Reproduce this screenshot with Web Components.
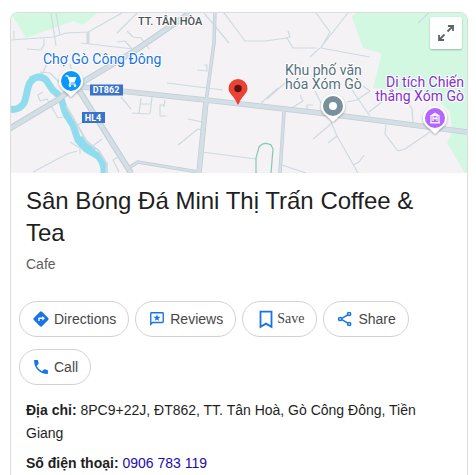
<!DOCTYPE html>
<html lang="vi">
<head>
<meta charset="utf-8">
<meta name="viewport" content="width=device-width, initial-scale=1">
<title>Sân Bóng Đá Mini Thị Trấn Coffee &amp; Tea</title>
<style>
  body { margin: 12px 8px 0 10px; background: #fff; color: #1f1f1f; font-family: "Liberation Sans", Arial, sans-serif; font-size: 14px; }
</style>
</head>
<body>
<place-card>
  <place-map slot="map"></place-map>
  <place-heading kind="Cafe">Sân Bóng Đá Mini Thị Trấn Coffee &amp; Tea</place-heading>
  <action-row>
    <action-button icon="directions">Directions</action-button>
    <action-button icon="reviews">Reviews</action-button>
    <action-button icon="save">Save</action-button>
    <action-button icon="share">Share</action-button>
    <action-button icon="call">Call</action-button>
  </action-row>
  <place-fact label="Địa chỉ:">8PC9+22J, ĐT862, TT. Tân Hoà, Gò Công Đông, Tiền Giang</place-fact>
  <place-fact label="Số điện thoại:" href="tel:0906783119">0906 783 119</place-fact>
</place-card>

<script>
class ShadowElement extends HTMLElement {
  connectedCallback() {
    if (this.shadowRoot) return;
    this.attachShadow({ mode: 'open' }).innerHTML = this.render();
  }
}

customElements.define('place-card', class extends ShadowElement {
  render() {
    return `<style>
      :host { display: block; box-sizing: border-box; min-height: calc(100vh - 12px); border: 1px solid #dadce0; border-bottom: 0; border-radius: 8px 8px 0 0; overflow: hidden; }
      .body { padding: 12px 15px 0; }
    </style>
    <slot name="map"></slot>
    <div class="body"><slot></slot></div>`;
  }
});

customElements.define('place-heading', class extends ShadowElement {
  render() {
    return `<style>
      :host { display: block; }
      h2 { margin: 0; font-size: 24px; line-height: 32px; font-weight: 400; }
      p { margin: 5px 0 0; font-size: 14px; line-height: 20px; color: #5e5e5e; }
    </style>
    <h2><slot></slot></h2><p>${this.getAttribute('kind')}</p>`;
  }
});

customElements.define('action-row', class extends ShadowElement {
  render() {
    return `<style>
      :host { display: flex; flex-wrap: wrap; gap: 12px 6px; margin: 27px -7px 14px; }
    </style><slot></slot>`;
  }
});

const ICONS = {
  directions: '<path fill="#1a73e8" d="M22.4 10.6l-9-9a2 2 0 0 0-2.8 0l-9 9a2 2 0 0 0 0 2.8l9 9a2 2 0 0 0 2.8 0l9-9a2 2 0 0 0 0-2.8zM14 14.5V12h-4v3H8v-4c0-.6.4-1 1-1h5V7.500l3.500 3.500z"/>',
  reviews: '<path fill="#1a73e8" d="M20 2H4a2 2 0 0 0-2 2v18l4-4h14a2 2 0 0 0 2-2V4a2 2 0 0 0-2-2zm0 14H5.200L4 17.200V4h16z"/><path fill="#1a73e8" d="M12 5.200l1.300 3.400 3.700.2-2.900 2.300 1 3.500-3.100-2-3.100 2 1-3.500L7 8.800l3.700-.2z"/>',
  save: '<path fill="none" stroke="#1a73e8" stroke-width="2" d="M6 4h12v16.500l-6-3.500-6 3.500z"/>',
  share: '<g fill="none" stroke="#1a73e8" stroke-width="2.200"><path d="M7.500 11l8.500-5M7.500 13l8.500 5"/><circle cx="5" cy="12" r="2.300"/><circle cx="18" cy="4.800" r="2.300"/><circle cx="18" cy="19.200" r="2.300"/></g>',
  call: '<path fill="#1a73e8" d="M6.200 2H2.800C2.300 2 2 2.300 2 2.800 2 13.400 10.600 22 21.200 22c.5 0 .8-.3.800-.8v-4c0-.5-.3-.9-.8-1l-4-.8c-.4-.1-.7 0-1 .3l-2.600 2.600A16.500 16.500 0 0 1 5.700 10.400l2.600-2.600c.3-.3.400-.6.300-1l-.8-4c-.1-.5-.5-.8-1-.8z"/>'
};

customElements.define('action-button', class extends ShadowElement {
  render() {
    const name = this.getAttribute('icon');
    const box = name === 'save' ? '0 0 24 24' : '-1 -1 26 26';
    return `<style>
      :host { display: block; }
      button { display: flex; align-items: center; gap: 4px; box-sizing: border-box; height: 36px; margin: 0; padding: 0 12px; border: 1px solid #d2d2d2; border-radius: 18px; background: #fff; color: #474747; font: inherit; line-height: 20px; cursor: pointer; }
      svg { flex: none; width: 18px; height: 18px; }
      .save { gap: 0; font-family: "Liberation Serif", "Times New Roman", serif; }
      .save svg { width: 22px; height: 22px; }
    </style>
    <button type="button" class="${name}"><svg viewBox="${box}" aria-hidden="true">${ICONS[name]}</svg><span><slot></slot></span></button>`;
  }
});

customElements.define('place-fact', class extends ShadowElement {
  render() {
    const href = this.getAttribute('href');
    return `<style>
      :host { display: block; margin-bottom: 7px; line-height: 23px; }
      a { color: #1a0dab; text-decoration: none; }
    </style>
    <b>${this.getAttribute('label')}</b> ${href ? `<a href="${href}"><slot></slot></a>` : '<slot></slot>'}`;
  }
});

customElements.define('place-map', class extends ShadowElement {
  render() {
    return `<style>
      :host { display: block; position: relative; height: 160px; background: #f4f2f4; }
      .canvas { display: block; width: 100%; height: 100%; }
      text { font-family: Roboto, sans-serif; font-size: 14px; paint-order: stroke; stroke: #fff; stroke-width: 2px; stroke-linejoin: round; }
      .town { font-size: 11px; font-weight: 500; fill: #4b5157; }
      .shield { font-size: 9px; font-weight: 700; fill: #fff; stroke: none; text-anchor: middle; }
      .market { fill: #1a73e8; }
      .area { fill: #557080; }
      .relic { fill: #8430ce; }
      button { position: absolute; top: 4px; right: 5px; width: 32px; height: 32px; padding: 6px; border: 0; border-radius: 2px; background: #fffffff0; box-shadow: 0 1px 2px #0004; cursor: pointer; }
      button svg { display: block; width: 20px; height: 20px; }
    </style>
    <svg class="canvas" viewBox="11 13 456 160" preserveAspectRatio="xMidYMid slice" role="img" aria-label="Map">
      <g fill="#d3f8e2">
        <path d="M11 13h86L83 25l-10-4-47 17z"/>
        <path d="M355 13l-3 4 11 31 14 4q5 1 4 5l-8 31 52 4 12 7 13 13 2 21-5 10 18 30h2V13z"/>
      </g>
      <g fill="none" stroke="#cddae2" stroke-width="1.200" stroke-linejoin="round">
        <path d="M11 40l43-3 12-4 22-1 34-19M14 31v8M51 13l5 33M56 13l4 22M27 49l14 1 3-5v-6M81 43l52 6M127 31l6 6 8 1 8 11M117 42l8-1 8 9M47 63l-4 10-14 4M40 72l10 1 9 9M70 64l3 12M137 13l-20 20"/>
        <path d="M43 92l-5 3 2 6 7-2 11 19 5-1M33 172l34-18 10-3M70 142l10 6v6M78 125l8-5M90 148l12-9M119 172l-6-12 5-3M121 97l10 12M132 113l17 1M141 98l-2 15M152 97l-2 17M140 104h11"/>
        <path d="M204 13l25 30M224 13l21 28h20l22-3M287 38l6 10h24M288 31l2 6-5 1M197 70l10 1v-6h-3M167 83l56 7M267 99l18-16M262 106v-4l16-14M300 95l3 6-13 8M307 112v-7h6M315 91l8 16M165 100l-1 7M164 105h-4v11h6M188 119l14 3M178 145l20-16 4 1M202 152l54 7M282 165l24 8"/>
        <path d="M316 13l14 19-9 16 49 9M348 13l-27 34M320 48l-10 9M418 23l14-13M347 102l10-2 13-9-7-5M352 90l18 26M369 112l14-11M405 98l7 11 1 14M386 125l-1 9 13 17 7-2 25-17M331 122l6 14 21 37M313 139l19-16M328 143l9-7M353 165l6-3 5-7"/>
      </g>
      <path d="M88 32v12" stroke="#cddae2" stroke-width="3"/>
      <path d="M9 109q10 2 15-6c4-8 2-24 14-26 11 0 10 10 17 15 8 5 7 13 11 22l7 11 5 15 8 9 12 7q7 7 6 18" fill="none" stroke="#8fdcef" stroke-width="7" stroke-linejoin="round"/>
      <path d="M75 139l7 10 10 2 5-2-15-13z" fill="#8fdcef"/>
      <path d="M66 106l13 22 8 14 12 9 8 13-1 9" fill="none" stroke="#cddae2" stroke-width="2"/>
      <g fill="none" stroke="#c1ced6">
        <path d="M9 129l50-30 12-10 62-37 57-39M73 82l9 13 49 78" stroke-width="6"/>
        <path d="M73 86l133 14 114 13 147 19M206 101l-7 72" stroke-width="5.500"/>
        <path d="M215 11l-1 32-8 59M284 112l-4 61M130 167l8-5 60 10" stroke-width="3.500"/>
      </g>
      <g fill="none" stroke="#d4dee5">
        <path d="M9 129l50-30 12-10 62-37 57-39M73 82l9 13 49 78" stroke-width="4"/>
        <path d="M73 86l133 14 114 13 147 19M206 101l-7 72" stroke-width="4"/>
        <path d="M215 11l-1 32-8 59M284 112l-4 61M130 167l8-5 60 10" stroke-width="2"/>
      </g>
      <path d="M256 173v-15l3-11q5-6 12-2l2 4-2 24" fill="none" stroke="#83c9b1" stroke-width="1.200"/>

      <path d="M90 84.500h33v11H90zM82 112h23v11H82z" fill="#3973c9"/>
      <text class="shield" x="106" y="93">DT862</text>
      <text class="shield" x="93" y="121">HL4</text>

      <defs>
        <filter id="lift" x="-30%" y="-30%" width="160%" height="160%"><feDropShadow dx="0" dy="1" stdDeviation="0.800" flood-color="#000" flood-opacity="0.350"/></filter>
        <path id="drop" d="M0-12a12 12 0 0 1 12 12c0 5-3 8-7 11l-4 4q-1 1-2 0l-4-4c-4-3-7-6-7-11a12 12 0 0 1 12-12z" fill="#fff"/>
      </defs>
      <g transform="translate(71 81)">
        <use href="#drop" filter="url(#lift)"/><circle r="10" fill="#0a97ff"/>
        <path d="M-3-4h8.500L3.500 1.500h-5z" fill="#fff"/><path d="M-5.500-5.200h2.200l3 6.500-1.200 1.700H4.500" fill="none" stroke="#fff" stroke-width="1.200"/><circle cx="-1" cy="4.800" r="1.200" fill="#fff"/><circle cx="4" cy="4.800" r="1.200" fill="#fff"/>
      </g>
      <g transform="translate(333 106)">
        <use href="#drop" filter="url(#lift)"/><circle r="10" fill="#78909c"/><circle r="4" fill="#fff"/>
      </g>
      <g transform="translate(435 118)">
        <use href="#drop" filter="url(#lift)"/><circle r="10" fill="#b366ff"/>
        <path d="M-5.500-2L0-5.500 5.500-2zM-5 4h10v1.500H-5z" fill="#fff" fill-opacity=".9"/><path d="M-4-2v6M4-2v6M-2 3v-4l2 2 2-2v4" fill="none" stroke="#fff" stroke-width="1.200"/>
      </g>
      <path d="M238 79a9.500 9.500 0 0 1 9.500 9.500c0 5-6 8-8.300 14.500q-1.200 3-2.400 0c-2.300-6.500-8.300-9.500-8.300-14.500A9.500 9.500 0 0 1 238 79z" fill="#ea4335"/>
      <circle cx="238" cy="88.500" r="3.700" fill="#5c1310"/>

      <text class="town" x="138" y="25">TT. TÂN HÒA</text>
      <text class="market" x="43" y="64">Chợ Gò Công Đông</text>
      <text class="area" x="285" y="75">Khu phố văn</text>
      <text class="area" x="285" y="89">hóa Xóm Gò</text>
      <text class="relic" x="464" y="87" text-anchor="end">Di tích Chiến</text>
      <text class="relic" x="464" y="101" text-anchor="end">thắng Xóm Gò</text>
    </svg>
    <button type="button" aria-label="Expand map"><svg viewBox="0 0 20 20" fill="none" stroke="#5f6368" stroke-width="1.800" aria-hidden="true"><path d="M11.500 8.500L17 3M12 3h5v5M8.500 11.500L3 17M3 12v5h5"/></svg></button>`;
  }
});
</script>
</body>
</html>
